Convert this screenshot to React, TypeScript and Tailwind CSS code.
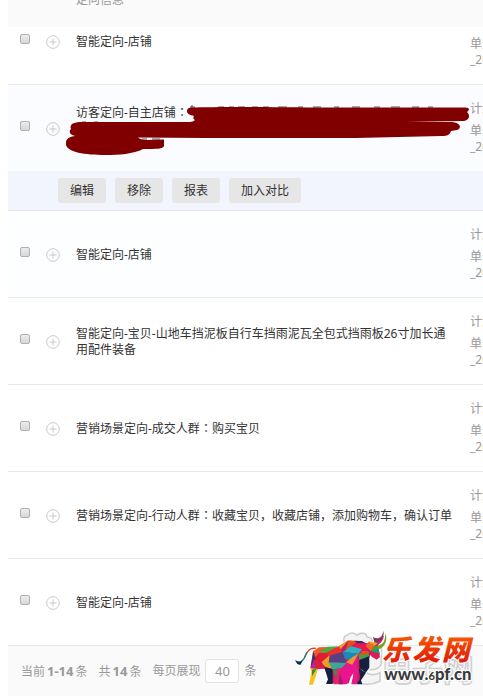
import { Fragment, type ReactNode } from "react";

type Item = {
  id: number;
  name: string;
  tone: string;
  clipped?: boolean;
  selected?: boolean;
};

const items: Item[] = [
  { id: 1, name: "智能定向-店铺", tone: "bg-white", clipped: true },
  { id: 2, name: "访客定向-自主店铺：", tone: "bg-[#fbfcff]", selected: true },
  { id: 3, name: "智能定向-店铺", tone: "bg-[#fcfeff]" },
  {
    id: 4,
    name: "智能定向-宝贝-山地车挡泥板自行车挡雨泥瓦全包式挡雨板26寸加长通用配件装备",
    tone: "bg-white",
  },
  { id: 5, name: "营销场景定向-成交人群：购买宝贝", tone: "bg-white" },
  { id: 6, name: "营销场景定向-行动人群：收藏宝贝，收藏店铺，添加购物车，确认订单", tone: "bg-white" },
  { id: 7, name: "智能定向-店铺", tone: "bg-white" },
];

const actions = ["编辑", "移除", "报表", "加入对比"];

function Cell({ clipped, children }: { clipped?: boolean; children: ReactNode }) {
  return (
    <div className={`flex flex-col justify-end overflow-hidden ${clipped ? "h-[57px]" : "h-[86px]"}`}>
      <div className="flex h-[86px] shrink-0 items-center">{children}</div>
    </div>
  );
}

/* The colon is set in a face that centres it in its square */
function Name({ text }: { text: string }) {
  return text.split("：").map((part, i) => (
    <Fragment key={i}>
      {i > 0 && (
        <span className="font-['Noto_Sans_CJK_JP',sans-serif] leading-none" lang="ja">
          ：
        </span>
      )}
      {part}
    </Fragment>
  ));
}

function PlusIcon() {
  return (
    <svg viewBox="0 0 14 14" className="size-[14px]" fill="none" stroke="#c8c8c8" aria-hidden="true">
      <circle cx="7" cy="7" r="6.3" />
      <path d="M7 3.5v7M3.5 7h7" />
    </svg>
  );
}

/* Paint strokes that cover the private part of a name */
function Redaction() {
  return (
    <svg
      viewBox="0 0 410 54"
      className="pointer-events-none absolute top-[17px] left-[-10px] z-10 h-[54px] w-[410px]"
      aria-hidden="true"
    >
      <path
        d="M124 5h5M126 3v3M152 5h6M163 5h5M172 5h7M186 5h6M197 5h6M212 5h9M232 5h5M247 5h8M268 5h5M286 5h8M308 5h6M325 5h9M346 5h7M362 5h5M16 20h4M28 20h4M76 37h5M86 37h8"
        stroke="#555"
        strokeWidth="1"
      />
      <path
        fill="#800000"
        d="M127 5.500C170 4 230 6 300 5.500L398 5.500C404 5 404 8 401 10C405 14 403 19 396 19L340 20L384 20C395 20 396 26 391 28L385 29C384 33 381 34 376 34L290 36L140 36L72 35.500C74 37 76 38 80 38L98 37.500V44C97 47 91 47 77 47C68 52 52 53 40 53C18 53 2 50 0 43C-1 37 3 34 12 34C4 34 2 30 5 27C3 22 8 20 16 20L124 20C126 20 128 19 129 18C127 17 127 16 128 14C124 13 121 12 121 9C121 6 124 5 127 5.500Z"
      />
    </svg>
  );
}

function SiteLogo() {
  return (
    <svg
      viewBox="0 0 609 228"
      className="pointer-events-none absolute right-0 bottom-0 h-[76px] w-[203px]"
      role="img"
      aria-label="乐发网 www.6pf.cn"
    >
      <defs>
        <linearGradient id="flame" x1="0" y1="0" x2="0" y2="1">
          <stop offset="0" stopColor="#ff6a00" />
          <stop offset="1" stopColor="#d80c0c" />
        </linearGradient>
      </defs>
      {/* grey emblem behind */}
      <g fill="#f4f4f4" stroke="#cfcfcf" strokeWidth="5">
        <path d="M207 76C188 70 186 50 202 45C212 35 224 39 231 45C244 35 260 39 261 51C276 51 283 66 272 76" />
        <path d="M224 78C195 100 195 168 224 184C250 197 278 194 300 184V158C276 169 256 164 254 145C270 153 299 150 304 130V86C285 68 250 66 224 78Z" />
      </g>
      <text
        x="305"
        y="182"
        fontSize="92"
        className="font-['Noto_Sans_CJK_SC',sans-serif] font-bold"
        fill="#f4f4f4"
        stroke="#cfcfcf"
        strokeWidth="4"
      >
        电子网
      </text>
      {/* bull */}
      <path d="M111 87C88 80 81 98 73 113C68 124 61 128 52 125" fill="none" stroke="#fff" strokeWidth="10" />
      <path d="M111 86C87 80 81 97 73 112" fill="none" stroke="#d5402b" strokeWidth="4" />
      <path d="M81 97C75 109 73 124 55 127" fill="none" stroke="#247d7a" strokeWidth="4" />
      <path d="M45 121L60 126L69 121L61 135L52 132Z" fill="#162a50" />
      <path
        d="M99 94L117 82L177 79L205 61L235 63L267 70L286 65C304 60 311 47 310 32C320 49 309 69 296 77L301 101L297 117L284 116L273 108L265 123L268 143L257 158L245 151L241 193H222H210L200 193H176H161H138L128 150L114 150L99 194H87L94 156L90 140Z"
        fill="#d21860"
        stroke="#fff"
        strokeWidth="5"
        strokeLinejoin="round"
      />
      <path d="M99 194L114 147L134 146L146 178L138 194Z" fill="#fafafa" />
      <path d="M99 94L117 82L143 81L116 100L102 121Z" fill="#ef5b24" />
      <path d="M102 121L116 100L138 97L149 105L125 126Z" fill="#e51a31" />
      <path d="M116 98L141 80L177 79L138 99Z" fill="#52a744" />
      <path d="M138 99L177 79L187 96L149 107Z" fill="#ec302c" />
      <path d="M177 79L205 61L196 95L187 96Z" fill="#c01f5d" />
      <path d="M177 79L205 61L182 88Z" fill="#f0a020" />
      <path d="M205 61L235 63L213 78L196 95Z" fill="#e64f1e" />
      <path d="M222 62L246 63L262 72L240 74Z" fill="#3b2a63" />
      <path d="M235 70L267 70L258 92L213 78Z" fill="#e61852" />
      <path d="M213 78L246 88L235 101L190 96Z" fill="#2ab3c2" />
      <path d="M190 96L235 101L219 123L177 111Z" fill="#168bb9" />
      <path d="M149 107L187 96L200 129L146 127Z" fill="#594181" />
      <path d="M125 126L149 105L146 127L169 149L134 141Z" fill="#ef9b20" />
      <path d="M146 127L200 129L186 145L157 148Z" fill="#38a89a" />
      <path d="M186 145L200 129L219 123L235 101L232 136L222 160L208 178L200 193H176L178 165Z" fill="#e9158c" />
      <path d="M198 127L219 110L235 101L217 134Z" fill="#ec9630" />
      <path d="M235 101L265 93L268 109L238 120Z" fill="#3aa548" />
      <path d="M238 120L268 109L268 143L257 158L238 143Z" fill="#16213f" />
      <path d="M246 92L265 93L262 103L240 106Z" fill="#ec4c1d" />
      <path d="M99 94L108 115L91 145Z" fill="#512d69" />
      <path d="M91 145L102 121L122 127L114 147Z" fill="#be248d" />
      <path d="M103 118L136 139L109 146Z" fill="#dd1f3d" />
      <path d="M94 156L91 145L114 147L99 194H87Z" fill="#f3c321" />
      <path d="M96 149L110 146L96 169Z" fill="#3c8a37" />
      <path d="M133 141L158 147L158 192H138L144 178Z" fill="#142144" />
      <path d="M157 148L186 145L176 169L176 193H161L164 172Z" fill="#e7246a" />
      <path d="M158 148L171 148L169 176Z" fill="#318f4b" />
      <path d="M176 193L180 160L190 193Z" fill="#9c1f6f" />
      <path d="M205 193L212 172L222 156L214 193Z" fill="#fafafa" />
      <path d="M219 135L236 143L229 193H214L220 171Z" fill="#e7198e" />
      <path d="M236 145L258 158L243 181L247 193H229L238 181L240 170Z" fill="#15213d" />
      <path d="M257 78L267 64L283 78L273 94Z" fill="#ee6b20" />
      <path d="M267 64L294 70L283 78Z" fill="#ee9f20" />
      <path d="M283 78L296 77L298 99L273 94Z" fill="#43a03a" />
      <path d="M268 96L298 99L300 111L290 119L275 110Z" fill="#df1c57" />
      <path d="M274 94L294 87L300 102Z" fill="#20977d" />
      <path d="M279 51C294 59 307 54 310 32C315 52 300 70 283 67Z" fill="#78375b" />
      <path d="M292 77C309 76 316 63 316 40C325 61 313 84 295 88Z" fill="#7a9c29" />
      {/* wordmark */}
      <text
        y="121"
        fontSize="84"
        className="font-['Noto_Sans_CJK_SC',sans-serif] font-black italic"
        fill="url(#flame)"
        stroke="#fff"
        strokeWidth="6"
        strokeLinejoin="round"
        paintOrder="stroke"
      >
        <tspan x="306">乐</tspan>
        <tspan x="397">发</tspan>
        <tspan x="485">网</tspan>
      </text>
      <text
        x="313"
        y="179"
        fontSize="50"
        className="font-[Lato,sans-serif] font-black"
        fill="#3b3b3d"
        stroke="#fff"
        strokeWidth="7"
        strokeLinejoin="round"
        paintOrder="stroke"
      >
        www.<tspan fontSize="34">6</tspan>pf.cn
      </text>
    </svg>
  );
}

function ItemRow({ item }: { item: Item }) {
  const { id, name, tone, clipped, selected } = item;
  return (
    <>
      <tr className={`${tone} ${selected ? "" : "border-b border-[#e8e8e8]"}`}>
        <td className="p-0">
          <Cell clipped={clipped}>
            <input
              id={`item-${id}`}
              type="checkbox"
              className="mb-1 ml-3 size-[10px] appearance-none rounded-xs border border-[#b0b0b0] bg-linear-to-b from-[#ececec] to-[#d8d8d8] checked:bg-gray-500"
            />
          </Cell>
        </td>
        <td className="p-0">
          <Cell clipped={clipped}>
            <button type="button" aria-label="展开" className="mt-0.5 ml-1">
              <PlusIcon />
            </button>
          </Cell>
        </td>
        <td className="relative p-0">
          <Cell clipped={clipped}>
            <label htmlFor={`item-${id}`} className={`pt-px pr-4 ${selected ? "min-h-12" : ""}`}>
              <Name text={name} />
            </label>
          </Cell>
          {selected && <Redaction />}
        </td>
        <td className="overflow-hidden p-0 whitespace-nowrap text-[#999]">
          <Cell clipped={clipped}>
            <div>
              <p className="mb-1.5">计划：</p>
              <p>单元：</p>
              <p>_20</p>
            </div>
          </Cell>
        </td>
      </tr>
      {selected && (
        <tr className="border-b border-[#e8e8e8] bg-[#f2f5fd]">
          <td colSpan={4} className="p-0">
            <div className="flex h-[39px] items-start gap-[9px] pt-[7px] pl-[50px]">
              {actions.map((action) => (
                <button key={action} type="button" className="h-[25px] rounded-[3px] bg-[#e6e6e6] px-3">
                  {action}
                </button>
              ))}
            </div>
          </td>
        </tr>
      )}
    </>
  );
}

export default function App() {
  return (
    <main className="relative overflow-hidden bg-white pl-2 font-['Noto_Sans','Noto_Sans_CJK_SC',sans-serif] text-xs/4 text-[#333]">
      <table className="w-full table-fixed border-collapse">
        <colgroup>
          <col className="w-[34px]" />
          <col className="w-[34px]" />
          <col />
          <col className="w-[13px]" />
        </colgroup>
        <thead>
          <tr className="bg-[#fafafa] text-left text-[#999]">
            <td className="p-0" />
            <td className="p-0" />
            <th scope="col" className="p-0 font-normal">
              <div className="flex h-[27px] flex-col justify-end pb-[19px]">定向信息</div>
            </th>
            <td className="p-0" />
          </tr>
        </thead>
        <tbody>
          {items.map((item) => (
            <ItemRow key={item.id} item={item} />
          ))}
        </tbody>
      </table>
      <footer className="flex h-[50px] items-center gap-[11px] bg-[#fafafa] pl-[13px] text-[#999]">
        <span>
          当前<b className="mx-0.5 text-[13px]">1-14</b>条
        </span>
        <span>
          共<b className="mx-0.5 text-[13px]">14</b>条
        </span>
        <label className="flex items-center gap-[5px]">
          每页展现
          <input
            type="text"
            defaultValue="40"
            className="h-6 w-[34px] rounded-[3px] border border-[#e4e4e4] bg-white text-center text-[13px]"
          />
          <span>条</span>
        </label>
      </footer>
      <SiteLogo />
    </main>
  );
}
